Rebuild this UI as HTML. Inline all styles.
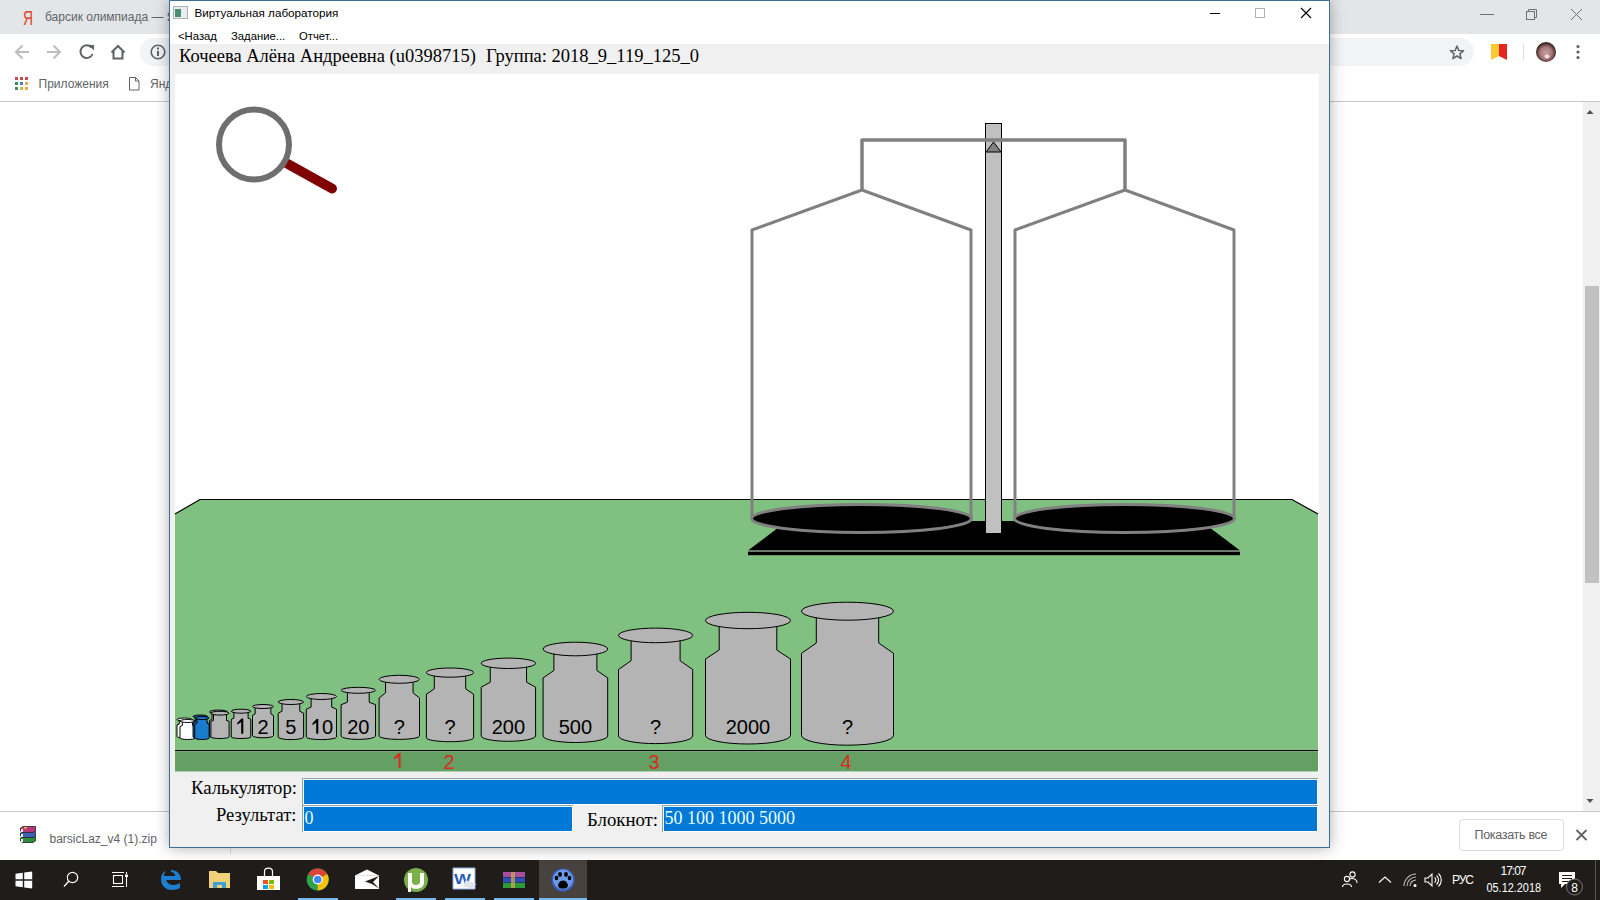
<!DOCTYPE html>
<html><head><meta charset="utf-8"><style>
*{margin:0;padding:0;box-sizing:border-box}
html,body{width:1600px;height:900px;overflow:hidden;background:#fff;font-family:"Liberation Sans",sans-serif}
.a{position:absolute;white-space:nowrap}
</style></head><body>

<div class="a" style="left:0;top:0;width:1600px;height:34px;background:#e3e6e8"></div>
<div class="a" style="left:0;top:34px;width:1600px;height:67px;background:#fff"></div>
<div class="a" style="left:140px;top:38px;width:1334px;height:28px;background:#f1f3f4;border-radius:14px"></div>
<div class="a" style="left:0;top:101px;width:1600px;height:1px;background:#c8c8c8"></div>
<div class="a" style="left:1583px;top:102px;width:17px;height:709px;background:#f0f0f0"></div>
<div class="a" style="left:1585px;top:286px;width:14px;height:297px;background:#c1c1c1"></div>
<div class="a" style="left:0;top:811px;width:1600px;height:1px;background:#c8c8c8"></div>
<div class="a" style="left:0;top:860px;width:1600px;height:40px;background:#201c1a"></div>


<svg class="a" style="left:0;top:0" width="1600" height="900" viewBox="0 0 1600 900">
<text x="23" y="24.5" font-family="Liberation Sans" font-size="20" fill="#e23d28" textLength="10" lengthAdjust="spacingAndGlyphs">Я</text>
<text x="45" y="21" font-family="Liberation Sans" font-size="12" fill="#5f6368">барсик олимпиада — Я</text>
<g fill="none" stroke="#707070" stroke-width="1">
<path d="M1480,14.5 H1494"/>
<rect x="1526.5" y="11.5" width="8" height="8"/><path d="M1528.5,11.5 V9.5 H1536.5 V17.5 H1534.5"/>
<path d="M1571,9 L1582,20 M1582,9 L1571,20"/>
</g>
<g fill="none" stroke="#bdbdbd" stroke-width="2">
<path d="M29,52 H16.5 M22.5,45.5 L16,52 L22.5,58.5"/>
<path d="M47,52 H59.5 M53.5,45.5 L60,52 L53.5,58.5"/>
</g>
<g fill="none" stroke="#5f6368" stroke-width="2">
<path d="M91.5,47.5 A6.3,6.3 0 1 0 92.6,54"/>
<path d="M111.5,52.5 L118,46 L124.5,52.5 M113.5,51 V58.5 H122.5 V51"/>
<circle cx="158" cy="52" r="6.8" stroke-width="1.6"/>
</g>
<path d="M88.5,45 H94 V50.5 Z" fill="#5f6368"/>
<rect x="157" y="51" width="2" height="5" fill="#5f6368"/><rect x="157" y="47.5" width="2" height="2" fill="#5f6368"/>
<path d="M1457,46 L1458.8,50.5 L1463.6,50.8 L1459.9,53.9 L1461.1,58.6 L1457,56 L1452.9,58.6 L1454.1,53.9 L1450.4,50.8 L1455.2,50.5 Z" fill="none" stroke="#5f6368" stroke-width="1.5" stroke-linejoin="round"/>
<path d="M1491,44 H1499 V56 L1491,60 Z" fill="#fbc932"/>
<path d="M1499,44 H1507 V60 L1499,56 Z" fill="#e52620"/>
<rect x="1523" y="44" width="1" height="16" fill="#dadce0"/>
<defs><radialGradient id="av" cx="0.5" cy="0.55" r="0.5"><stop offset="0" stop-color="#c9a0a0"/><stop offset="0.6" stop-color="#a87878"/><stop offset="1" stop-color="#3a2424"/></radialGradient></defs>
<circle cx="1546" cy="52" r="10" fill="url(#av)"/>
<ellipse cx="1547" cy="56.5" rx="2.5" ry="2" fill="#f0e0e0"/>
<g fill="#5f6368"><circle cx="1578" cy="46.5" r="1.6"/><circle cx="1578" cy="52" r="1.6"/><circle cx="1578" cy="57.5" r="1.6"/></g>
<g fill="#5f6368">
<rect x="15" y="77" width="3" height="3" fill="#c0504d"/><rect x="20" y="77" width="3" height="3" fill="#c0504d"/><rect x="25" y="77" width="3" height="3" fill="#c0504d"/>
<rect x="15" y="82" width="3" height="3" fill="#3d8a5a"/><rect x="20" y="82" width="3" height="3" fill="#4a7bd0"/><rect x="25" y="82" width="3" height="3" fill="#e0b04a"/>
<rect x="15" y="87" width="3" height="3" fill="#3d8a5a"/><rect x="20" y="87" width="3" height="3" fill="#e0b04a"/><rect x="25" y="87" width="3" height="3" fill="#e0b04a"/>
</g>
<text x="38.5" y="88" font-family="Liberation Sans" font-size="12" fill="#5f6368">Приложения</text>
<path d="M129.5,77.5 H135.5 L139,81 V90 H129.5 Z M135.5,77.5 V81 H139" fill="none" stroke="#5f6368" stroke-width="1"/>
<text x="150" y="88" font-family="Liberation Sans" font-size="12" fill="#5f6368">Яндекс</text>
<path d="M1586.5,114 L1590,110 L1593.5,114 Z" fill="#505050"/>
<path d="M1586.5,799 L1590,803 L1593.5,799 Z" fill="#505050"/>

<g stroke="#222" stroke-width=".8">
<path d="M20.5,838 L23,836.5 H35.5 V841 L33,842.5 H22.5 L20.5,841 Z" fill="#2f8a3e"/>
<path d="M20.5,833 L23,831.5 H35.5 V836 L33,837.5 H22.5 L20.5,836 Z" fill="#3a62b8"/>
<path d="M20.5,828 L23,826.5 H35.5 V831 L33,832.5 H22.5 L20.5,831 Z" fill="#b8367e"/>
</g>
<g fill="#eee"><rect x="21" y="829" width="2" height="3"/><rect x="21" y="834" width="2" height="3"/><rect x="21" y="839" width="2" height="3"/></g>
<rect x="24" y="827" width="3" height="1.5" fill="#e8c040"/>
<text x="49.5" y="842.5" font-family="Liberation Sans" font-size="12" fill="#5f6368">barsicLaz_v4 (1).zip</text>
<rect x="230" y="847" width="1" height="7" fill="#dadce0"/>
<rect x="1459.5" y="819.5" width="104" height="31" rx="3" fill="#fff" stroke="#dadce0"/>
<text x="1474.5" y="839" font-family="Liberation Sans" font-size="12.5" fill="#5f6368" textLength="73">Показать все</text>
<path d="M1576.5,830 L1586.5,840 M1586.5,830 L1576.5,840" stroke="#5f6368" stroke-width="1.8"/>

<rect x="539" y="860" width="48" height="40" fill="#48423e"/>
<g fill="#76b9ed">
<rect x="298" y="898" width="40" height="2"/><rect x="396" y="898" width="40" height="2"/><rect x="445" y="898" width="40" height="2"/><rect x="494" y="898" width="40" height="2"/><rect x="539" y="898" width="48" height="2"/>
</g>
<path d="M15.5,873.8 L22.8,872.8 V879.3 H15.5 Z M24.2,872.6 L32.2,871.6 V879.3 H24.2 Z M15.5,880.7 H22.8 V887.2 L15.5,886.2 Z M24.2,880.7 H32.2 V888.4 L24.2,887.4 Z" fill="#fff"/>
<circle cx="72.5" cy="877.5" r="5.2" fill="none" stroke="#fff" stroke-width="1.2"/>
<path d="M68.8,881.2 L64,886.5" stroke="#fff" stroke-width="1.3"/>
<g fill="none" stroke="#fff" stroke-width="1.1">
<rect x="113.5" y="875.5" width="9" height="8"/><path d="M112,872.5 H124 M112,886.5 H124 M126.5,872 V874 M126.5,877 V887"/>
</g>
<rect x="125" y="874.5" width="3" height="2.5" fill="#fff"/>
<path d="M171,870 C177,870 181,874 181,880 H166 C167,883 170,885 173,885 C176,885 178,884 180,883 V888 C178,889 175,890 172,890 C165,890 161,885 161,879 C161,875 163,872 166,871 C164,873 164,875 164,876 H175 C175,873 173,872 171,872 Z" fill="#1e7ed0"/>
<path d="M209,871 H216 L218,873 H230 V888 H209 Z" fill="#f1d27b"/>
<path d="M213,888 V882 H226 V888 H222 V885 H217 V888 Z" fill="#3fa0d5"/>
<path d="M257,876 H280 V890 H257 Z" fill="#fff"/>
<path d="M264.5,876 V871.5 C264.5,867 272.5,867 272.5,871.5 V876" fill="none" stroke="#fff" stroke-width="1.2"/>
<rect x="263" y="880" width="5" height="4" fill="#f25022"/><rect x="269" y="880" width="5" height="4" fill="#7fba00"/>
<rect x="263" y="885" width="5" height="4" fill="#00a4ef"/><rect x="269" y="885" width="5" height="4" fill="#ffb900"/>
<circle cx="317.7" cy="879.5" r="11" fill="#2fa24c"/>
<path d="M317.7,879.5 L308.2,874 A11,11 0 0 1 327.2,874 Z" fill="#db4437"/>
<path d="M317.7,879.5 L327.2,874 A11,11 0 0 1 317.7,890.5 Z" fill="#f4c20d"/>
<circle cx="317.7" cy="879.5" r="5" fill="#fff"/><circle cx="317.7" cy="879.5" r="3.8" fill="#4285f4"/>
<path d="M355,875.5 L367,869.5 L379,875.5 V889 H355 Z" fill="#fff"/>
<path d="M355.5,875.5 H378.5" stroke="#ccc" stroke-width=".6"/>
<path d="M379,876 L365,881.5 L372,884 L379,888.5 L373,882 Z" fill="#201c1a"/>
<circle cx="416" cy="880" r="12" fill="#79b04a"/>
<path d="M408,873 H412 V882 C412,884 414,885 416,885 C418,885 420,884 420,882 V873 H424 V882 C424,887 420,889 416,889 C414,889 412,888 411,887 V892 H408 Z" fill="#fff"/>
<path d="M453,868 H475 V889 H453 Z" fill="#fff"/>
<path d="M453,868 H475 V889 H453 Z" fill="none" stroke="#8fb0e0" stroke-width="1"/>
<text x="454" y="884" font-family="Liberation Sans" font-weight="bold" font-size="15" fill="#2a5fb8" textLength="17" lengthAdjust="spacingAndGlyphs">W</text>
<path d="M466,880 L476,884 L472,889 L463,886 Z" fill="#dde6f2"/>
<g>
<rect x="503" y="872" width="22" height="5" fill="#a84ea0"/>
<rect x="503" y="877.5" width="22" height="5" fill="#2d4fb5"/>
<rect x="503" y="883" width="22" height="5" fill="#2a9a3a"/>
<rect x="511" y="872" width="4" height="16" fill="#c8a050" opacity=".8"/>
</g>
<circle cx="563" cy="880" r="11.5" fill="#3d5fc0"/>
<circle cx="563" cy="879.5" r="10" fill="#6d9ae8"/>
<g fill="#000"><path d="M558.5,887 C557,884 560,880.5 563,880.5 C566,880.5 569,884 567.5,887 C566,889 560,889 558.5,887 Z"/><ellipse cx="556.5" cy="878" rx="1.8" ry="2.3"/><ellipse cx="560" cy="874.5" rx="1.9" ry="2.4"/><ellipse cx="566" cy="874.5" rx="1.9" ry="2.4"/><ellipse cx="569.5" cy="878" rx="1.8" ry="2.3"/></g>
<g fill="none" stroke="#fff" stroke-width="1.1">
<circle cx="1347" cy="879" r="2.6"/><path d="M1342.5,887 C1342.5,883 1351.5,883 1351.5,887"/>
<circle cx="1352.5" cy="874.5" r="2.6"/><path d="M1349,879.5 C1351,878 1357,878 1357,883"/>
<path d="M1379,882.5 L1385,877 L1391,882.5"/>
<path d="M1404,886 A12,12 0 0 1 1416,874 M1407,886 A9,9 0 0 1 1416,877 M1410,886 A6,6 0 0 1 1416,880" stroke="#bbb"/>
<path d="M1425,878 H1428 L1432,874 V886 L1428,882 H1425 Z"/>
<path d="M1434.5,877.5 A3,3 0 0 1 1434.5,882.5 M1436.5,875.5 A6,6 0 0 1 1436.5,884.5 M1438.5,873.5 A9,9 0 0 1 1438.5,886.5"/>
</g>
<circle cx="1415" cy="885.5" r="1.5" fill="#fff"/>
<g font-family="Liberation Sans" font-size="12" fill="#fff">
<text x="1452" y="883.6" textLength="22">РУС</text>
<text x="1500.5" y="874.8" textLength="26">17:07</text>
<text x="1486.5" y="892.4" textLength="54.5" lengthAdjust="spacingAndGlyphs">05.12.2018</text>
</g>
<path d="M1559,872 H1575 V884 H1565 L1561,888 V884 H1559 Z" fill="#fff"/>
<g stroke="#201c1a" stroke-width="1"><path d="M1562,875.5 H1572 M1562,878.5 H1572 M1562,881.5 H1569"/></g>
<circle cx="1574.5" cy="887" r="8" fill="#201c1a" stroke="#777" stroke-width="1"/>
<text x="1574.5" y="891.5" text-anchor="middle" font-family="Liberation Sans" font-size="12" fill="#fff">8</text>
<rect x="1595" y="860" width="1" height="40" fill="#555"/>
</svg>


<div class="a" style="left:169px;top:0;width:1161px;height:848px;background:#f0f0f0;border:1px solid #3a6f96;box-shadow:0 0 14px rgba(0,0,0,.32)">
  <div class="a" style="left:0;top:0;width:1159px;height:43px;background:#fff"></div>
  <div class="a" style="left:5px;top:73px;width:1144px;height:698px;background:#fff"></div>
</div>


<svg class="a" style="left:0;top:0" width="1600" height="900" viewBox="0 0 1600 900">
<rect x="173.5" y="6.5" width="14" height="12" fill="#e8eef0" stroke="#a9b4b8"/>
<rect x="175" y="9" width="6" height="8" fill="#4a8f73"/>
<text x="194.4" y="17" font-family="Liberation Sans" font-size="11.7" fill="#000">Виртуальная лаборатория</text>
<rect x="1210" y="13" width="10" height="1" fill="#000"/>
<rect x="1255.5" y="8.5" width="9" height="9" fill="none" stroke="#b0b0b0"/>
<path d="M1301,8 L1311,18 M1311,8 L1301,18" stroke="#000" stroke-width="1.1"/>
<g font-family="Liberation Sans" font-size="11.3" fill="#000">
<text x="178" y="40">&lt;Назад</text><text x="231" y="40">Задание...</text><text x="299" y="40">Отчет...</text>
</g>
<text x="179" y="62" font-family="Liberation Serif" font-size="18.5" fill="#000">Кочеева Алёна Андреевна (u0398715)</text>
<text x="486" y="62" font-family="Liberation Serif" font-size="18.5" fill="#000">Группа: 2018_9_119_125_0</text>

<polygon points="175,514 200,499.5 1292,499.5 1318,514 1318,751 175,751" fill="#80c080"/>
<polyline points="175,514 200,499.5 1292,499.5 1318,514" fill="none" stroke="#000" stroke-width="1.2"/>
<rect x="175" y="750" width="1143" height="1.3" fill="#000"/>
<rect x="175" y="751.3" width="1143" height="20.2" fill="#64a064"/>
<line x1="287" y1="163.5" x2="332" y2="188.5" stroke="#800000" stroke-width="10" stroke-linecap="round"/>
<circle cx="254" cy="144.5" r="35" fill="none" stroke="#6e6e6e" stroke-width="6"/>
<polygon points="787,521 1201,521 1240,550.5 748,550.5" fill="#000"/>
<rect x="748" y="550.5" width="492" height="1.3" fill="#909090"/>
<rect x="748" y="551.8" width="492" height="3.4" fill="#000"/>
<polyline points="752,518 752,230 862,190 971,230 971,518" fill="none" stroke="#808080" stroke-width="3" stroke-linejoin="round"/>
<polyline points="1015,518 1015,230 1125,190 1234,230 1234,518" fill="none" stroke="#808080" stroke-width="3" stroke-linejoin="round"/>
<ellipse cx="861.5" cy="518.5" rx="110" ry="14" fill="#000" stroke="#808080" stroke-width="3"/>
<ellipse cx="1124.5" cy="518.5" rx="110" ry="14" fill="#000" stroke="#808080" stroke-width="3"/>
<rect x="985.5" y="123.5" width="16" height="410" fill="#c0c0c0" stroke="#000" stroke-width="1"/>
<polyline points="862,190 862,140 1125,140 1125,190" fill="none" stroke="#808080" stroke-width="3.5" stroke-linejoin="round"/>
<polygon points="993.5,142 1001,152 986,152" fill="#808080" stroke="#000" stroke-width="1"/>
<path d="M179.3,719.5 L179.3,724 L177,725 L177,736.5 A7.5,1.5 0 0 0 192,736.5 L192,725 L189.7,724 L189.7,719.5 Z" fill="#fff" stroke="#000" stroke-width="1"/><ellipse cx="184.5" cy="719.5" rx="7.5" ry="1.5" fill="#fff" stroke="#000" stroke-width="1"/>
<path d="M182.3,721 L182.3,725.5 L180,726.5 L180,738 A7.5,1.5 0 0 0 195,738 L195,726.5 L192.7,725.5 L192.7,721 Z" fill="#fff" stroke="#000" stroke-width="1"/><ellipse cx="187.5" cy="721" rx="7.5" ry="1.5" fill="#fff" stroke="#000" stroke-width="1"/>
<path d="M195.3,716.5 L195.3,721.5 L193.05,722.5 L193.05,737 A7.25,1.5 0 0 0 207.55,737 L207.55,722.5 L205.3,721.5 L205.3,716.5 Z" fill="#1c6aa8" stroke="#000" stroke-width="1"/><ellipse cx="200.3" cy="716.5" rx="7.25" ry="1.5" fill="#1c6aa8" stroke="#000" stroke-width="1"/>
<path d="M197,718 L197,723 L194.75,724 L194.75,738 A7.25,1.5 0 0 0 209.25,738 L209.25,724 L207,723 L207,718 Z" fill="#1a7ccc" stroke="#000" stroke-width="1"/><ellipse cx="202" cy="718" rx="7.25" ry="1.5" fill="#1a7ccc" stroke="#000" stroke-width="1"/>
<path d="M212,712 L212,719.5 L209.4,720.5 L209.4,736 A9.1,1.5 0 0 0 227.6,736 L227.6,720.5 L225,719.5 L225,712 Z" fill="#b4b4b4" stroke="#000" stroke-width="1"/><ellipse cx="218.5" cy="712" rx="9.1" ry="1.9" fill="#b4b4b4" stroke="#000" stroke-width="1"/>
<path d="M213.5,713.2 L213.5,720.5 L210.9,721.5 L210.9,737 A9.1,1.5 0 0 0 229.1,737 L229.1,721.5 L226.5,720.5 L226.5,713.2 Z" fill="#b4b4b4" stroke="#000" stroke-width="1"/><ellipse cx="220" cy="713.2" rx="9.1" ry="1.9" fill="#b4b4b4" stroke="#000" stroke-width="1"/>
<path d="M233.9,711.2 L233.9,718.25 L231.25,719.25 L231.25,737 A9.75,1.5 0 0 0 250.75,737 L250.75,719.25 L248.1,718.25 L248.1,711.2 Z" fill="#b4b4b4" stroke="#000" stroke-width="1"/><ellipse cx="241" cy="711.2" rx="9.75" ry="2" fill="#b4b4b4" stroke="#000" stroke-width="1"/>
<polygon points="243.3,733.8 243.3,718.5 241.6,718.5 237.3,722.7 237.3,724.8 241.2,722.1 241.2,733.8" fill="#000"/>
<path d="M255.15,706.5 L255.15,713.9 L252.5,715.4 L252.5,735.6 A10.5,2.2 0 0 0 273.5,735.6 L273.5,715.4 L270.85,713.9 L270.85,706.5 Z" fill="#b4b4b4" stroke="#000" stroke-width="1"/><ellipse cx="263" cy="706.5" rx="10.5" ry="2" fill="#b4b4b4" stroke="#000" stroke-width="1"/>
<text x="263" y="733.5" text-anchor="middle" font-family="Liberation Sans" font-size="20" fill="#000">2</text>
<path d="M282.05,702 L282.05,711.2 L278.2,713.2 L278.2,737 A12.7,2.6 0 0 0 303.6,737 L303.6,713.2 L299.75,711.2 L299.75,702 Z" fill="#b4b4b4" stroke="#000" stroke-width="1"/><ellipse cx="290.9" cy="702" rx="12.7" ry="2.5" fill="#b4b4b4" stroke="#000" stroke-width="1"/>
<text x="290.9" y="733.5" text-anchor="middle" font-family="Liberation Sans" font-size="20" fill="#000">5</text>
<path d="M311.1,696.5 L311.1,707.1 L306.3,709.2 L306.3,737 A15.1,2.6 0 0 0 336.5,737 L336.5,709.2 L331.7,707.1 L331.7,696.5 Z" fill="#b4b4b4" stroke="#000" stroke-width="1"/><ellipse cx="321.4" cy="696.5" rx="15.1" ry="3" fill="#b4b4b4" stroke="#000" stroke-width="1"/>
<polygon points="318.3,733.8 318.3,719 316.6,719 312.5,723.2 312.5,725.3 316.2,722.6 316.2,733.8" fill="#000"/>
<text x="322" y="733.5" font-family="Liberation Sans" font-size="20" fill="#000">0</text>
<path d="M347.4,690.3 L347.4,702.2 L341.1,704.7 L341.1,736.1 A17.2,3.3 0 0 0 375.5,736.1 L375.5,704.7 L369.2,702.2 L369.2,690.3 Z" fill="#b4b4b4" stroke="#000" stroke-width="1"/><ellipse cx="358.3" cy="690.3" rx="17.2" ry="3" fill="#b4b4b4" stroke="#000" stroke-width="1"/>
<text x="358.3" y="733.5" text-anchor="middle" font-family="Liberation Sans" font-size="20" fill="#000">20</text>
<path d="M385.55,679.3 L385.55,692.8 L379.1,698 L379.1,736.1 A20.2,3.3 0 0 0 419.5,736.1 L419.5,698 L413.05,692.8 L413.05,679.3 Z" fill="#b4b4b4" stroke="#000" stroke-width="1"/><ellipse cx="399.3" cy="679.3" rx="20.2" ry="4" fill="#b4b4b4" stroke="#000" stroke-width="1"/>
<text x="399.3" y="733.5" text-anchor="middle" font-family="Liberation Sans" font-size="20" fill="#000">?</text>
<path d="M434.3,672.6 L434.3,688.9 L426.4,694.2 L426.4,737.8 A23.6,3.9 0 0 0 473.6,737.8 L473.6,694.2 L465.7,688.9 L465.7,672.6 Z" fill="#b4b4b4" stroke="#000" stroke-width="1"/><ellipse cx="450" cy="672.6" rx="23.6" ry="4.6" fill="#b4b4b4" stroke="#000" stroke-width="1"/>
<text x="450" y="733.5" text-anchor="middle" font-family="Liberation Sans" font-size="20" fill="#000">?</text>
<path d="M490.25,663.3 L490.25,682.2 L481.2,687.2 L481.2,735.9 A27.2,5.4 0 0 0 535.6,735.9 L535.6,687.2 L526.55,682.2 L526.55,663.3 Z" fill="#b4b4b4" stroke="#000" stroke-width="1"/><ellipse cx="508.4" cy="663.3" rx="27.2" ry="5.2" fill="#b4b4b4" stroke="#000" stroke-width="1"/>
<text x="508.4" y="733.5" text-anchor="middle" font-family="Liberation Sans" font-size="20" fill="#000">200</text>
<path d="M553.9,649 L553.9,670.5 L543.1,677.9 L543.1,735.9 A32.3,6.6 0 0 0 607.7,735.9 L607.7,677.9 L596.9,670.5 L596.9,649 Z" fill="#b4b4b4" stroke="#000" stroke-width="1"/><ellipse cx="575.4" cy="649" rx="32.3" ry="6.8" fill="#b4b4b4" stroke="#000" stroke-width="1"/>
<text x="575.4" y="733.5" text-anchor="middle" font-family="Liberation Sans" font-size="20" fill="#000">500</text>
<path d="M631.1,635.4 L631.1,660.7 L618.5,669.5 L618.5,735.9 A37.1,7.7 0 0 0 692.7,735.9 L692.7,669.5 L680.1,660.7 L680.1,635.4 Z" fill="#b4b4b4" stroke="#000" stroke-width="1"/><ellipse cx="655.6" cy="635.4" rx="37.1" ry="7.3" fill="#b4b4b4" stroke="#000" stroke-width="1"/>
<text x="655.6" y="733.5" text-anchor="middle" font-family="Liberation Sans" font-size="20" fill="#000">?</text>
<path d="M719.2,620.5 L719.2,650 L705.5,659 L705.5,735.4 A42.5,8.6 0 0 0 790.5,735.4 L790.5,659 L776.8,650 L776.8,620.5 Z" fill="#b4b4b4" stroke="#000" stroke-width="1"/><ellipse cx="748" cy="620.5" rx="42.5" ry="8.2" fill="#b4b4b4" stroke="#000" stroke-width="1"/>
<text x="748" y="733.5" text-anchor="middle" font-family="Liberation Sans" font-size="20" fill="#000">2000</text>
<path d="M816.3,611.2 L816.3,643 L801.5,653.3 L801.5,735.4 A46,9.8 0 0 0 893.5,735.4 L893.5,653.3 L878.7,643 L878.7,611.2 Z" fill="#b4b4b4" stroke="#000" stroke-width="1"/><ellipse cx="847.5" cy="611.2" rx="46" ry="9" fill="#b4b4b4" stroke="#000" stroke-width="1"/>
<text x="847.5" y="733.5" text-anchor="middle" font-family="Liberation Sans" font-size="20" fill="#000">?</text>
<polygon points="400.6,768.1 400.6,753.1 398.9,753.1 394.2,757.3 394.2,759.4 398.5,756.7 398.5,768.1" fill="#dc2a1c"/>

<g font-family="Liberation Sans" font-size="20" fill="#dc2a1c" text-anchor="middle">
<text x="449" y="769">2</text><text x="654" y="769">3</text><text x="846" y="769">4</text>
</g>

<g font-family="Liberation Serif" font-size="18.5" fill="#000">
<text x="191" y="794" textLength="106" lengthAdjust="spacingAndGlyphs">Калькулятор:</text>
<text x="216" y="821" textLength="80.5" lengthAdjust="spacingAndGlyphs">Результат:</text>
<text x="587" y="826" textLength="71" lengthAdjust="spacingAndGlyphs">Блокнот:</text>
</g>
<rect x="302" y="778" width="1016" height="27" fill="#a0a0a0"/>
<rect x="303" y="779" width="1015" height="26" fill="#fff"/>
<rect x="303" y="779" width="1014" height="25" fill="#dff"/>
<rect x="304" y="780" width="1013" height="24" fill="#0078d7"/>

<rect x="302" y="805" width="271" height="27" fill="#a0a0a0"/>
<rect x="303" y="806" width="270" height="26" fill="#fff"/>
<rect x="303" y="806" width="269" height="25" fill="#dff"/>
<rect x="304" y="807" width="268" height="24" fill="#0078d7"/>

<rect x="662" y="805" width="656" height="27" fill="#a0a0a0"/>
<rect x="663" y="806" width="655" height="26" fill="#fff"/>
<rect x="663" y="806" width="654" height="25" fill="#dff"/>
<rect x="664" y="807" width="653" height="24" fill="#0078d7"/>
<g font-family="Liberation Serif" font-size="18" fill="#e6ffff">
<text x="304.5" y="824">0</text>
<text x="664.5" y="823.5">50 100 1000 5000</text>
</g>
</svg>

</body></html>
